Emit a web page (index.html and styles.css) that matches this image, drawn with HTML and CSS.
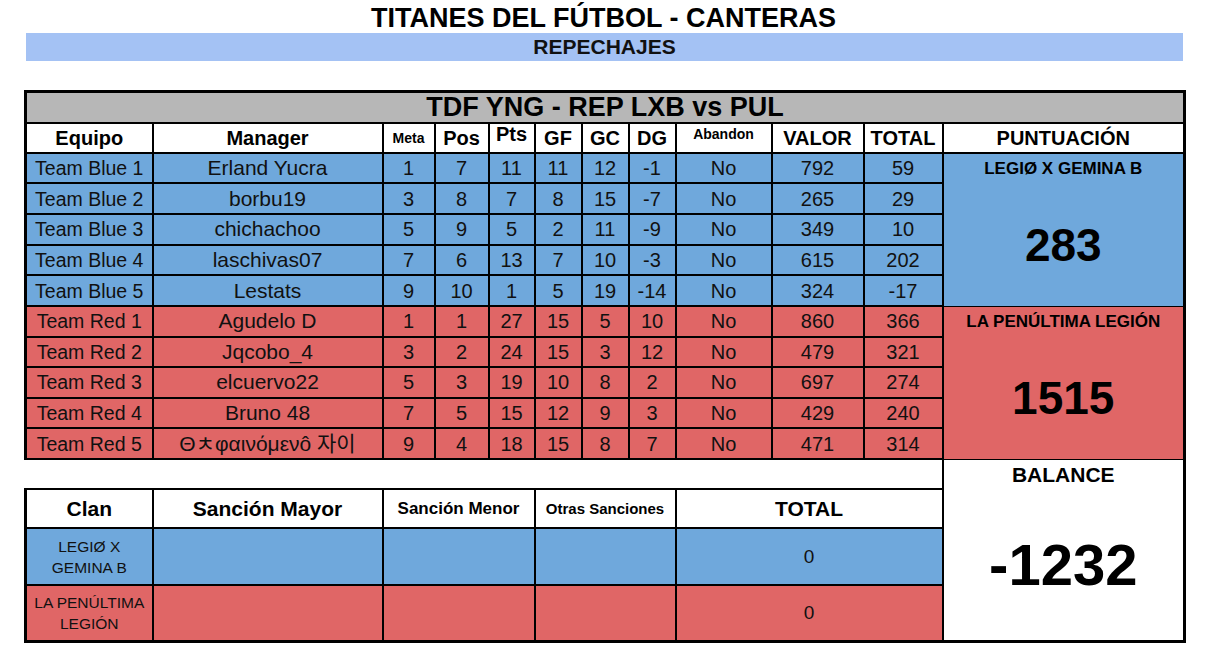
FILE: index.html
```html
<!DOCTYPE html>
<html lang="es">
<head>
<meta charset="utf-8">
<title>Titanes del Fútbol - Canteras</title>
<link rel="stylesheet" href="styles.css">
</head>
<body>
<div class="page">
  <h1 class="title">TITANES DEL FÚTBOL - CANTERAS</h1>
  <div class="banner">REPECHAJES</div>
  <table class="sheet">
    <colgroup>
      <col style="width:127px"><col style="width:230px"><col style="width:52px"><col style="width:54px">
      <col style="width:46px"><col style="width:47px"><col style="width:47px"><col style="width:47px">
      <col style="width:96px"><col style="width:92px"><col style="width:79px"><col style="width:242px">
    </colgroup>
    <tr class="r-title">
      <td colspan="12" class="gray first-row left-edge right-edge">TDF YNG - REP LXB vs PUL</td>
    </tr>
    <tr class="r-head">
      <td class="h left-edge">Equipo</td>
      <td class="h">Manager</td>
      <td class="h small">Meta</td>
      <td class="h">Pos</td>
      <td class="h top">Pts</td>
      <td class="h">GF</td>
      <td class="h">GC</td>
      <td class="h">DG</td>
      <td class="h small top">Abandon</td>
      <td class="h">VALOR</td>
      <td class="h">TOTAL</td>
      <td class="h right-edge">PUNTUACIÓN</td>
    </tr>
    <tr class="r-data blue">
      <td class="team left-edge">Team Blue 1</td><td class="mgr">Erland Yucra</td><td>1</td><td>7</td><td>11</td><td>11</td><td>12</td><td>-1</td><td>No</td><td>792</td><td>59</td>
      <td rowspan="5" class="panel blue-panel right-edge"><div class="pname">LEGIØ X GEMINA B</div><div class="pnum">283</div></td>
    </tr>
    <tr class="r-data blue">
      <td class="team left-edge">Team Blue 2</td><td class="mgr">borbu19</td><td>3</td><td>8</td><td>7</td><td>8</td><td>15</td><td>-7</td><td>No</td><td>265</td><td>29</td>
    </tr>
    <tr class="r-data blue">
      <td class="team left-edge">Team Blue 3</td><td class="mgr">chichachoo</td><td>5</td><td>9</td><td>5</td><td>2</td><td>11</td><td>-9</td><td>No</td><td>349</td><td>10</td>
    </tr>
    <tr class="r-data blue">
      <td class="team left-edge">Team Blue 4</td><td class="mgr">laschivas07</td><td>7</td><td>6</td><td>13</td><td>7</td><td>10</td><td>-3</td><td>No</td><td>615</td><td>202</td>
    </tr>
    <tr class="r-data blue">
      <td class="team left-edge">Team Blue 5</td><td class="mgr">Lestats</td><td>9</td><td>10</td><td>1</td><td>5</td><td>19</td><td>-14</td><td>No</td><td>324</td><td>-17</td>
    </tr>
    <tr class="r-data red">
      <td class="team left-edge">Team Red 1</td><td class="mgr">Agudelo D</td><td>1</td><td>1</td><td>27</td><td>15</td><td>5</td><td>10</td><td>No</td><td>860</td><td>366</td>
      <td rowspan="5" class="panel red-panel right-edge"><div class="pname">LA PENÚLTIMA LEGIÓN</div><div class="pnum">1515</div></td>
    </tr>
    <tr class="r-data red">
      <td class="team left-edge">Team Red 2</td><td class="mgr">Jqcobo_4</td><td>3</td><td>2</td><td>24</td><td>15</td><td>3</td><td>12</td><td>No</td><td>479</td><td>321</td>
    </tr>
    <tr class="r-data red">
      <td class="team left-edge">Team Red 3</td><td class="mgr">elcuervo22</td><td>5</td><td>3</td><td>19</td><td>10</td><td>8</td><td>2</td><td>No</td><td>697</td><td>274</td>
    </tr>
    <tr class="r-data red">
      <td class="team left-edge">Team Red 4</td><td class="mgr">Bruno 48</td><td>7</td><td>5</td><td>15</td><td>12</td><td>9</td><td>3</td><td>No</td><td>429</td><td>240</td>
    </tr>
    <tr class="r-data red">
      <td class="team left-edge">Team Red 5</td><td class="mgr">Θㅊφαινόμενô 자이</td><td>9</td><td>4</td><td>18</td><td>15</td><td>8</td><td>7</td><td>No</td><td>471</td><td>314</td>
    </tr>
    <tr class="r-gap">
      <td colspan="11" class="gap"></td>
      <td rowspan="4" class="balance right-edge bottom-edge"><div class="bname">BALANCE</div><div class="bnum">-1232</div></td>
    </tr>
    <tr class="r-bhead">
      <td class="h big left-edge">Clan</td>
      <td class="h big">Sanción Mayor</td>
      <td colspan="3" class="h mid">Sanción Menor</td>
      <td colspan="3" class="h mini">Otras Sanciones</td>
      <td colspan="3" class="h big">TOTAL</td>
    </tr>
    <tr class="r-clan blue">
      <td class="clan left-edge">LEGIØ X<br>GEMINA B</td><td></td><td colspan="3"></td><td colspan="3"></td><td colspan="3" class="zero">0</td>
    </tr>
    <tr class="r-clan2 red">
      <td class="clan left-edge bottom-edge">LA PENÚLTIMA<br>LEGIÓN</td><td class="bottom-edge"></td><td colspan="3" class="bottom-edge"></td><td colspan="3" class="bottom-edge"></td><td colspan="3" class="zero bottom-edge">0</td>
    </tr>
  </table>
</div>
</body>
</html>
```

FILE: styles.css
```css
* { box-sizing: border-box; }

body {
  margin: 0;
  background: #ffffff;
  color: #111111;
  font-family: "Liberation Sans", Arial, "Noto Sans CJK KR", sans-serif;
}

.page {
  width: 1207px;
  padding: 3px 24px 0 24px;
}

.title {
  margin: 0;
  font-size: 27px;
  font-weight: bold;
  line-height: 30px;
  text-align: center;
  color: #000;
}

.banner {
  margin-left: 2px;
  height: 28px;
  background: #a4c2f4;
  color: #111;
  text-align: center;
  font-size: 21px;
  font-weight: bold;
  line-height: 28px;
}

.sheet {
  margin-top: 29px;
  width: 1159px;
  table-layout: fixed;
  border-collapse: collapse;
}

.sheet td {
  border: 2px solid #000;
  padding: 0;
  text-align: center;
  vertical-align: middle;
  white-space: nowrap;
  overflow: hidden;
  font-size: 20px;
  line-height: 22px;
}

.first-row { border-top-width: 3px !important; }
.left-edge { border-left-width: 3px !important; }
.right-edge { border-right-width: 3px !important; }
.bottom-edge { border-bottom-width: 3px !important; }

.r-title td { height: 31px; }
.r-head td { height: 30px; }
.r-data td { height: 30.5px; }
.r-gap td { height: 30px; }
.r-bhead td { height: 39px; }
.r-clan td { height: 56px; }
.r-clan2 td { height: 56px; }

.gray {
  background: #b7b7b7;
  font-size: 27px !important;
  font-weight: bold;
  color: #000;
}

.h {
  background: #ffffff;
  font-weight: bold;
  color: #000;
  font-size: 20px !important;
}
.h.small { font-size: 14px !important; }
.h.top { vertical-align: top; line-height: 20px; }
.h.big { font-size: 21px !important; }
.h.mid { font-size: 17px !important; }
.h.mini { font-size: 15px !important; }

.blue td, .blue-panel { background: #6fa8dc; }
.red td, .red-panel { background: #e06666; }

.team { font-size: 19.5px !important; }
.mgr { font-size: 21px !important; }

.panel {
  vertical-align: top !important;
  color: #000;
}
.blue-panel { border-bottom-width: 1px !important; }
.red-panel { border-top-width: 1px !important; border-bottom-width: 1px !important; }

.pname {
  font-size: 17px;
  font-weight: bold;
  line-height: 30px;
}
.pnum {
  font-size: 46px;
  font-weight: bold;
  line-height: 122px;
}

.gap {
  background: #ffffff;
  border-left-style: hidden !important;
}

.balance {
  background: #ffffff;
  vertical-align: top !important;
  border-top-width: 1px !important;
  color: #000;
}
.bname {
  font-size: 21px;
  font-weight: bold;
  line-height: 30px;
}
.bnum {
  font-size: 58px;
  font-weight: bold;
  line-height: 150px;
}

.clan {
  font-size: 15.5px !important;
  line-height: 21px !important;
  white-space: normal !important;
}
.zero { font-size: 19px !important; }
```
